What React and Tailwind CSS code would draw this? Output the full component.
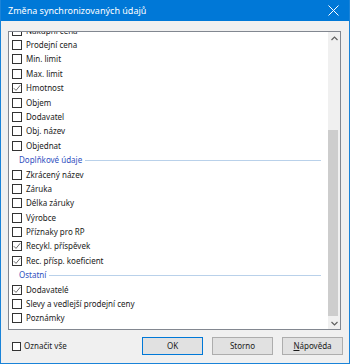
import React from "react";

function Box({ checked, size = "w-[10px] h-[10px]" }) {
  return (
    <span className={`relative ${size} shrink-0 border border-[#333333] bg-white flex items-center justify-center`}>
      {checked && (
        <svg width="8" height="8" viewBox="0 0 8 8" className="block">
          <path d="M0.8 4.2 L3 6.4 L7.3 1.2" fill="none" stroke="#5a5a5a" strokeWidth="0.9" />
        </svg>
      )}
    </span>
  );
}

function Row({ label, checked }) {
  return (
    <div className="flex items-center h-[14.4px] pl-[3px] shrink-0">
      <Box checked={checked} />
      <span className="ml-[4px] text-[8px] leading-[14px] text-[#1a1a1a] whitespace-nowrap">{label}</span>
    </div>
  );
}

function Header({ label }) {
  return (
    <div className="flex items-center h-[14.4px] pl-[10px] pr-[7px] shrink-0">
      <span className="text-[8px] leading-[14px] text-[#2f4fc0] whitespace-nowrap">{label}</span>
      <span className="ml-[3px] flex-1 h-px bg-[#b9d1ea]" />
    </div>
  );
}

const items = [
  { t: "r", l: "Nákupní cena" },
  { t: "r", l: "Prodejní cena" },
  { t: "r", l: "Min. limit" },
  { t: "r", l: "Max. limit" },
  { t: "r", l: "Hmotnost", c: true },
  { t: "r", l: "Objem" },
  { t: "r", l: "Dodavatel" },
  { t: "r", l: "Obj. název" },
  { t: "r", l: "Objednat" },
  { t: "h", l: "Doplňkové údaje" },
  { t: "r", l: "Zkrácený název" },
  { t: "r", l: "Záruka" },
  { t: "r", l: "Délka záruky" },
  { t: "r", l: "Výrobce" },
  { t: "r", l: "Příznaky pro RP" },
  { t: "r", l: "Recykl. příspěvek", c: true },
  { t: "r", l: "Rec. přísp. koeficient", c: true },
  { t: "h", l: "Ostatní" },
  { t: "r", l: "Dodavatelé", c: true },
  { t: "r", l: "Slevy a vedlejší prodejní ceny" },
  { t: "r", l: "Poznámky" },
];

function Btn({ children, def }) {
  return (
    <div
      className={`w-[61px] h-[18px] flex items-center justify-center bg-[#e1e1e1] border text-[8px] text-[#1a1a1a] ${
        def ? "border-[#0078d7]" : "border-[#adadad]"
      }`}
    >
      {children}
    </div>
  );
}

export default function App() {
  return (
    <div className="w-[350px] h-[364px] bg-[#f0f0f0] border-x border-b border-[#1a83d8] flex flex-col font-['Noto_Sans',sans-serif] overflow-hidden">
      <div className="h-[21px] shrink-0 bg-[#0078d7] flex items-center pl-[7px] pr-[5px]">
        <span className="text-white text-[9px] leading-none flex-1 whitespace-nowrap">Změna synchronizovaných údajů</span>
        <svg width="11" height="11" viewBox="0 0 11 11" className="mr-[5px]">
          <path d="M0.5 0.5 L10.5 10.5 M10.5 0.5 L0.5 10.5" stroke="white" strokeWidth="1" />
        </svg>
      </div>
      <div className="mt-[10px] ml-[7px] w-[333px] h-[299px] shrink-0 border border-[#828790] bg-white flex">
        <div className="flex-1 overflow-hidden">
          <div className="mt-[-8.6px] flex flex-col">
            {items.map((it, i) =>
              it.t === "h" ? <Header key={i} label={it.l} /> : <Row key={i} label={it.l} checked={it.c} />
            )}
          </div>
        </div>
        <div className="w-[12px] bg-[#f0f0f0] flex flex-col">
          <div className="h-[12px] flex items-center justify-center">
            <svg width="7" height="5" viewBox="0 0 7 5">
              <path d="M0.5 4 L3.5 1 L6.5 4" fill="none" stroke="#606060" strokeWidth="1.2" />
            </svg>
          </div>
          <div className="flex-1 flex flex-col">
            <div className="h-[86px]" />
            <div className="h-[186px] w-[10px] bg-[#cdcdcd]" />
            <div className="flex-1" />
          </div>
          <div className="h-[12px] flex items-center justify-center">
            <svg width="7" height="5" viewBox="0 0 7 5">
              <path d="M0.5 1 L3.5 4 L6.5 1" fill="none" stroke="#606060" strokeWidth="1.2" />
            </svg>
          </div>
        </div>
      </div>
      <div className="flex items-center mt-[7px] pl-[11px] pr-[6px]">
        <Box size="w-[9px] h-[9px]" />
        <span className="ml-[3px] text-[8px] text-[#1a1a1a] flex-1 whitespace-nowrap">Označit vše</span>
        <div className="flex gap-[9px]">
          <Btn def>OK</Btn>
          <Btn>Storno</Btn>
          <Btn>
            <span><span className="underline">N</span>ápověda</span>
          </Btn>
        </div>
      </div>
    </div>
  );
}
